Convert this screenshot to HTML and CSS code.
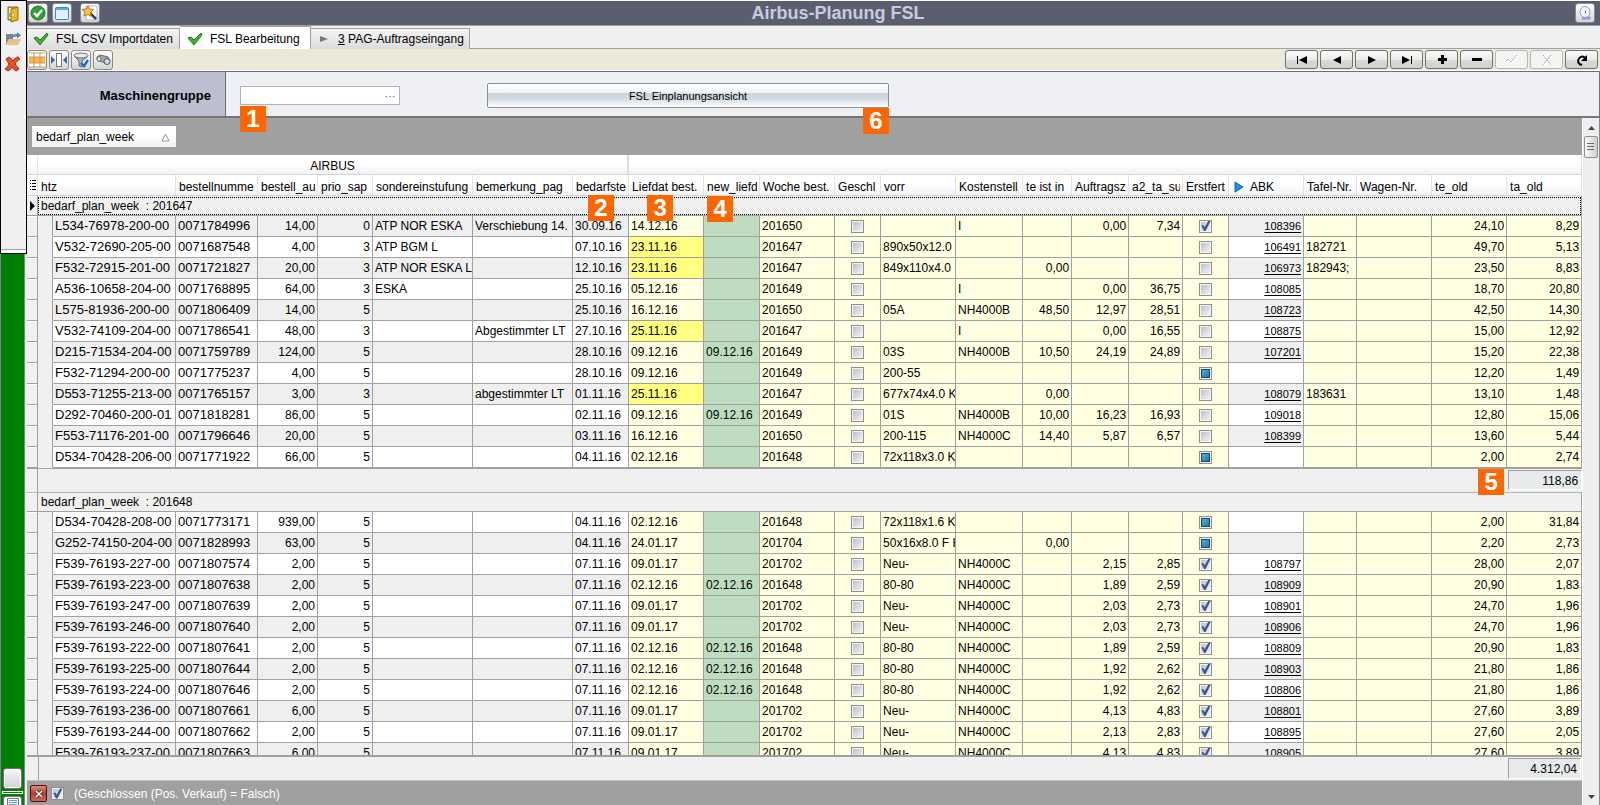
FILE: index.html
```html
<!DOCTYPE html>
<html lang="de">
<head>
<meta charset="utf-8">
<title>Airbus-Planung FSL</title>
<link rel="stylesheet" href="styles.css">
</head>
<body>
<div class="app">
  <aside class="dock">
    <div class="dock-tools">
      <button class="flat" aria-label="Beenden"><svg width="18" height="18" viewBox="0 0 18 18"><path d="M4 2h9v13H4z" fill="#c9a227" stroke="#8a6d1c"/><path d="M5 3h3v11H5z" fill="#fff8d8"/><path d="M7 4l7-2v13l-7 2z" fill="#e8b62c" stroke="#946f12"/><path d="M4 8h3v4H4z" fill="#7fc241"/><path d="M9 9v2" stroke="#fff"/></svg></button>
      <button class="flat" aria-label="Öffnen"><svg width="18" height="18" viewBox="0 0 18 18"><path d="M2 4h7v10H2z" fill="#7b828c"/><path d="M1 15l4-6h12l-3 6z" fill="#e3c48a"/><path d="M8 8c0-3 2-4 5-4V2l4 3.500-4 3V6.500c-2 0-4 0-5 1.500z" fill="#4d86b8"/></svg></button>
      <button class="flat" aria-label="Löschen"><svg width="18" height="18" viewBox="0 0 18 18"><path d="M2 4l3-2c2 1 3 3 4 4 1-2 3-4 5-4l2 2c-2 1-4 3-5 5 1 2 3 3 4 5l-3 2c-2-1-3-3-4-4-1 2-2 3-4 4l-3-2c2-2 3-3 4-5-1-2-2-3-3-5z" fill="#ee4a2c" stroke="#a82410"/></svg></button>
    </div>
    <div class="dock-body">
      <button class="square" aria-label="Fenster"></button>
      <div class="slot"></div>
      <div class="square cut"><svg width="14" height="7" viewBox="0 0 14 7"><path d="M1.500 7V.5h11V7" fill="#fff" stroke="#6c7684"/><path d="M3 2.500h8M3 4.500h8M3 6.500h8" stroke="#6d9bd0"/></svg></div>
    </div>
  </aside>

  <main class="main">
    <header class="title">
      <div class="title-tools">
        <button class="tool" aria-label="OK"><svg width="16" height="16" viewBox="0 0 16 16"><circle cx="8" cy="8" r="7" fill="#2fa032" stroke="#1b7a20"/><path d="M4 8l3 3 5-6" fill="none" stroke="#fff" stroke-width="2.400"/></svg></button>
        <button class="tool gap" aria-label="Fenster"><svg width="16" height="16" viewBox="0 0 16 16"><rect x="1.500" y="2.500" width="13" height="12" rx="1" fill="#e4effb" stroke="#2f86dc"/><path d="M2 3h12v2H2z" fill="#5aa9ef"/></svg></button>
        <button class="tool" aria-label="Assistent"><svg width="16" height="16" viewBox="0 0 16 16"><path d="M4 1h11v14H4z" fill="#fff" stroke="#b0b6d6"/><path d="M8 8l6 6" stroke="#39404f" stroke-width="2.500"/><path d="M6 1l1.500 3 4 .5-3 3 .5 4L6 9.500 2 11l1-4L0 4.500 4.500 4z" fill="#ffc23c" stroke="#c8701a"/></svg></button>
      </div>
      <h1>Airbus-Planung FSL</h1>
      <button class="tool" aria-label="Zeit"><svg width="16" height="16" viewBox="0 0 16 16"><path d="M6 12h7v2H5z" fill="#b9bde8" stroke="#8489c4"/><ellipse cx="8" cy="7" rx="5" ry="5.500" fill="#f2f3ff" stroke="#9296d8"/><path d="M8 6h1v2H8z" fill="#555"/></svg></button>
    </header>

    <nav class="tabs">
      <button class="tab first"><svg width="16" height="14" viewBox="0 0 16 14"><path d="M1 6l3-1 3 3 7-7 1 2-8 10z" fill="#3fb52f" stroke="#1d7d16"/></svg><span>FSL CSV Importdaten</span></button>
      <button class="tab active"><svg width="16" height="14" viewBox="0 0 16 14"><path d="M1 6l3-1 3 3 7-7 1 2-8 10z" fill="#3fb52f" stroke="#1d7d16"/></svg><span>FSL Bearbeitung</span></button>
      <button class="tab third"><svg width="16" height="14" viewBox="0 0 16 14"><path d="M5 4l8 3-8 3z" fill="#777"/></svg><span><u>3</u> PAG-Auftragseingang</span></button>
    </nav>

    <div class="toolbar">
      <div class="view-tools">
        <button class="tool" aria-label="Raster"><svg width="18" height="16" viewBox="0 0 18 16"><path d="M1 1h16v14H1z" fill="#fff"/><path d="M1 5h16v6H1z" fill="#ffb347"/><path d="M1 1h16M1 5h16M1 11h16M1 15h16M6 1v14M12 1v14" stroke="#c3995c" fill="none"/></svg></button>
        <button class="tool" aria-label="Spaltenbreite"><svg width="18" height="16" viewBox="0 0 18 16"><rect x="6.500" y="1.500" width="5" height="13" fill="#fff" stroke="#777"/><path d="M1 4v8l4-4zM17 4v8l-4-4z" fill="#2f6da8"/></svg></button>
        <button class="tool" aria-label="Filter"><svg width="18" height="16" viewBox="0 0 18 16"><path d="M2 4l5 5v5l3 1V9l6-5z" fill="#aab0b6" stroke="#6a7076"/><ellipse cx="9" cy="3.500" rx="7" ry="2.500" fill="#e6e8ea" stroke="#6a7076"/><path d="M9 11l3 3 4-6" fill="none" stroke="#1f6cc0" stroke-width="2.400"/></svg></button>
        <button class="tool" aria-label="Suchen"><svg width="18" height="16" viewBox="0 0 18 16"><path d="M3 5l3-2 8 2 2 4-3 3-4-2-4-1-2-2z" fill="#a3a6aa" stroke="#666"/><ellipse cx="5" cy="7" rx="2" ry="2.500" fill="#e4e6e8" stroke="#666"/><circle cx="13" cy="9.500" r="3" fill="#c3dbea" stroke="#555"/></svg></button>
      </div>
      <div class="record-tools">
        <button class="nav" aria-label="Erster"><svg width="16" height="12" viewBox="0 0 16 12"><path d="M3.500 2v8" stroke="#000"/><path d="M13 2v8L5 6z"/></svg></button>
        <button class="nav" aria-label="Zurück"><svg width="16" height="12" viewBox="0 0 16 12"><path d="M12 2v8L4 6z"/></svg></button>
        <button class="nav" aria-label="Vor"><svg width="16" height="12" viewBox="0 0 16 12"><path d="M4 2v8l8-4z"/></svg></button>
        <button class="nav" aria-label="Letzter"><svg width="16" height="12" viewBox="0 0 16 12"><path d="M3 2v8l8-4z"/><path d="M12.500 2v8" stroke="#000"/></svg></button>
        <button class="nav" aria-label="Einfügen"><svg width="16" height="12" viewBox="0 0 16 12"><path d="M8.500 1v9M4 5.500h9" stroke="#000" stroke-width="3"/></svg></button>
        <button class="nav" aria-label="Entfernen"><svg width="16" height="12" viewBox="0 0 16 12"><path d="M3 5.500h10" stroke="#000" stroke-width="3"/></svg></button>
        <button class="nav" disabled aria-label="Speichern"><svg width="16" height="12" viewBox="0 0 16 12"><path d="M3 8l2-2 3 3 6-7" fill="none" stroke="#fff" stroke-width="2"/><path d="M2 7l2-2 3 3 6-7" fill="none" stroke="#999" stroke-dasharray="2 1"/></svg></button>
        <button class="nav" disabled aria-label="Verwerfen"><svg width="16" height="12" viewBox="0 0 16 12"><path d="M5 2l8 10M13 2L5 12" fill="none" stroke="#fff" stroke-width="2"/><path d="M4 1l8 10M12 1L4 11" fill="none" stroke="#999" stroke-dasharray="2 1"/></svg></button>
        <button class="nav" aria-label="Aktualisieren"><svg width="16" height="12" viewBox="0 0 16 12"><path d="M8 11C4 10 3 7 5 4.500S9.500 2 11 4" fill="none" stroke="#000" stroke-width="2"/><path d="M13 1v6H7z"/></svg></button>
      </div>
    </div>

    <section class="form">
      <label class="form-label" for="gruppe">Maschinengruppe</label>
      <div class="form-body">
        <div class="lookup anchor">
          <input id="gruppe" type="text">
          <button class="dots" aria-label="Auswählen">···</button>
          <span class="badge badge-1">1</span>
        </div>
        <div class="anchor plan">
          <button class="plan-button">FSL Einplanungsansicht</button>
          <span class="badge badge-6">6</span>
        </div>
      </div>
    </section>

    <div class="lower">
      <div class="content">
        <div class="group-panel">
          <button class="group-chip"><span>bedarf_plan_week</span><svg width="9" height="9" viewBox="0 0 9 9"><path d="M4.500 1L8 8H1z" fill="#fff" stroke="#999"/></svg></button>
        </div>
        <div class="grid-view">
          <table class="grid">
            <colgroup id="cols"></colgroup>
            <thead id="head"></thead>
            <tbody id="body"></tbody>
          </table>
        </div>
        <div class="grid-total">
          <div class="total-mark"></div>
          <div class="sum">4.312,04</div>
        </div>
        <div class="filter-bar">
          <button class="clear" aria-label="Filter entfernen"><svg width="8" height="8" viewBox="0 0 8 8"><path d="M1 1l6 6M7 1L1 7" stroke="#333" stroke-width="3"/><path d="M1 1l6 6M7 1L1 7" stroke="#fff" stroke-width="1.500"/></svg></button>
          <label class="filter-label"><input class="check" type="checkbox" checked><span>(Geschlossen (Pos. Verkauf) = Falsch)</span></label>
        </div>
      </div>
      <div class="scrollbar">
        <svg width="9" height="6" viewBox="0 0 9 6"><path d="M1 5l3.500-4L8 5z" fill="#444"/></svg>
        <div class="thumb"><svg width="8" height="10" viewBox="0 0 8 10"><path d="M0 1.500h7M0 4.500h7M0 7.500h7" stroke="#666"/></svg></div>
        <svg class="down" width="9" height="6" viewBox="0 0 9 6"><path d="M1 1l3.500 4L8 1z" fill="#444"/></svg>
      </div>
    </div>
  </main>
</div>
<script src="app.js"></script>
</body>
</html>
```

FILE: styles.css
```css
*, *::before { box-sizing: border-box; }
body { margin: 0; font: 12px "Liberation Sans", Arial, sans-serif; color: #000; background: #f0f0f0; }
button, input { font: inherit; color: inherit; margin: 0; padding: 0; }
svg { display: block; flex: none; }
.app { display: flex; height: 100vh; overflow: hidden; }

.dock { display: flex; flex-direction: column; flex: none; width: 27px; }
.dock-tools { display: flex; flex-direction: column; align-items: flex-start; gap: 1px; height: 254px; padding-top: 1px; background: #f0f0f0; border: 1px solid #000; box-shadow: inset 0 -3px #fafafa, inset 0 -4px #a0a0a0; }
.flat { display: flex; align-items: center; justify-content: center; width: 24px; height: 24px; border: 0; background: none; }
.dock-body { display: flex; flex-direction: column; justify-content: flex-end; align-items: center; gap: 2px; flex: 1; margin-right: 2px; background: #008000; border-left: 1px solid #808090; border-right: 1px solid #808090; }
.square { width: 19px; height: 21px; border: 1px solid #777; border-radius: 3px; box-shadow: inset 0 0 0 1px #fff; background: linear-gradient(#f8f8f8, #d2d2d2); }
.slot { width: 21px; height: 3px; border: 1px solid #fff; }
.square.cut { display: flex; justify-content: center; align-items: flex-end; height: 9px; border-bottom: 0; border-radius: 3px 3px 0 0; background: #fff; }

.main { display: flex; flex-direction: column; flex: 1; min-width: 0; }
.title { display: flex; align-items: center; height: 26px; padding: 1px 5px 0 1px; background: #5a5e6e; border-bottom: 1px solid #a0a0a0; box-shadow: inset 0 1px #fff; }
.title-tools { display: flex; gap: 4px; width: 73px; }
.title h1 { flex: 1; margin: 0; text-align: center; font-size: 18px; line-height: 22px; color: #c8cbdc; }
.tool { display: flex; align-items: center; justify-content: center; width: 20px; height: 20px; border: 1px solid #8a8a8a; border-radius: 3px; background: linear-gradient(#fff, #d6d6d6); }
.tool.gap { margin-right: 4px; }

.tabs { display: flex; height: 23px; background: #f0f0f0; border-bottom: 1px solid #a0a0a0; }
.tab { display: flex; align-items: center; gap: 7px; margin-top: 2px; height: 21px; padding: 0 6px; white-space: nowrap; border: 1px solid #a0a0a0; border-bottom: 0; border-left: 0; background: linear-gradient(#f4f4f4, #dcdcdc); }
.tab.first { width: 153px; }
.tab.active { width: 131px; height: 23px; margin-top: 0; padding-top: 1px; padding-left: 7px; background: #fff; }
.tab.third { width: 159px; padding-left: 4px; }

.toolbar { display: flex; justify-content: space-between; align-items: center; height: 23px; padding: 0 2px 1px 0; background: #ece9d8; border-bottom: 1px solid #6d6f76; box-shadow: inset 0 -1px #fff; }
.view-tools, .record-tools { display: flex; gap: 2px; }
.nav { display: flex; align-items: center; justify-content: center; width: 33px; height: 19px; border: 1px solid #707070; border-radius: 3px; background: linear-gradient(#fafafa, #ececec 50%, #dadada 51%, #cfcfcf); }
.nav:disabled { border-color: #b4b8bc; background: #f4f4f4; }

.form { display: flex; height: 46px; border-bottom: 2px solid #74767e; background: #eff0f3; border-right: 1px solid #6d6f76; }
.form-label { display: flex; align-items: center; justify-content: flex-end; width: 199px; padding: 3px 14px 0 0; font-size: 13px; font-weight: bold; background: #bdbfd0; border-right: 1px solid #6d6f76; }
.form-body { display: flex; flex: 1; align-items: flex-start; padding: 11px 14px 0; }
.anchor { position: relative; }
.lookup { display: flex; width: 160px; height: 19px; margin-top: 3px; border: 1px solid #b0b4ba; background: #fff; }
.lookup input { flex: 1; min-width: 0; border: 0; outline: 0; background: none; }
.dots { width: 18px; border: 0; background: none; color: #555; font-size: 11px; line-height: 16px; }
.plan { margin-left: 87px; }
.plan-button { display: block; width: 402px; height: 25px; font-size: 11px; border: 1px solid #8a9098; border-radius: 2px; background: linear-gradient(#fff, #eef1f4 38%, #cad3dc 42%, #d4dce4 65%, #fff); }

.badge { position: absolute; z-index: 2; width: 26px; height: 26px; background: #f60; color: #fff; font-size: 24px; font-weight: bold; line-height: 26px; text-align: center; }
.badge-1 { left: -1px; top: 19px; }
.badge-6 { right: 0; top: 25px; }
.badge-2 { left: 15px; top: 20px; }
.badge-3 { left: 18px; top: 20px; }
.badge-4 { left: 3px; top: 21px; }
.badge-5 { left: 46px; top: 1px; }

.lower { display: flex; flex: 1; min-height: 0; }
.content { display: flex; flex-direction: column; flex: 1; min-width: 0; }
.group-panel { flex: none; height: 37px; padding: 8px 5px; background: #a0a0a0; }
.group-chip { display: flex; align-items: center; justify-content: space-between; width: 144px; height: 21px; padding: 1px 6px 0 4px; font-size: 12px; border: 0; background: linear-gradient(#fff 45%, #f1f2f5); }
.grid-view { flex: 1; min-height: 0; overflow: hidden; background: #f0f0f0; border-bottom: 2px solid #a0a0a0; }

.grid { width: 100%; table-layout: fixed; border-collapse: separate; border-spacing: 0; }
.grid th { position: relative; padding: 0; font-weight: normal; text-align: left; line-height: 16px; background: linear-gradient(#fff 42%, #f2f3f6); border-bottom: 1px solid #d5d5d5; border-right: 1px solid #e2e3e6; }
.bands th { height: 20px; padding-top: 2px; text-align: center; }
.bands .band { border-right: 2px solid #dcdde0; }
.heads th { height: 21px; }
.head-text { display: flex; align-items: center; gap: 6px; height: 17px; margin: 3px 2px 0 3px; overflow: hidden; white-space: nowrap; }
.grid td { height: 21px; padding: 0 2px; line-height: 16px; white-space: nowrap; overflow: hidden; border-right: 1px solid #a0a0a0; border-bottom: 1px solid #a0a0a0; background: #fff; }
.grid .odd td { background: #efefef; }
.grid td.code { font-size: 13px; }
.grid td.num { text-align: right; }
.grid td.center { text-align: center; }
.grid td.abk { text-align: right; }
.abk a { color: #000; font-size: 11px; text-decoration: underline; text-underline-offset: 2px; }
.grid td.soft { background: #ffffe1; }
.grid td.late { background: #ffff80; }
.grid td.green { background: #c0dcc0; }
.grid td.mark { padding: 0; background: #f0f0f0; box-shadow: inset 0 1px #fff; }
.grid td.indent { background: #f0f0f0; border-bottom-color: #f0f0f0; }
.grid td.group { padding: 0 3px; background: #f0f0f0; overflow: visible; }
.grid .group-row td { height: 19px; }
.grid .group-row.current td { height: 20px; }
.current .group-text { margin: 1px -3px 0; padding: 0 2px; border: 1px dotted #000; line-height: 16px; }
.grid .sum-row td { height: 25px; background: #f0f0f0; border-right: 0; border-bottom-color: #b4b4b4; box-shadow: inset 0 1px #a0a0a0; }
.grid .sum-row td.mark { border-right: 1px solid #a0a0a0; }
.grid .sum-row td.anchor { overflow: visible; }
.grid .sum-row td.sum-cell { padding: 2px 0 2px 1px; }
.sum { height: 21px; padding-right: 3px; text-align: right; line-height: 20px; background: #e6eaea; border: 1px solid #fff; border-left-color: #a0a0a0; border-top-color: #a0a0a0; }
.sum-row .sum { height: 20px; }

.check { appearance: none; display: block; width: 13px; height: 13px; margin: 0 auto; border: 1px solid #8e8f8f; background: linear-gradient(135deg, #b8bdc6, #f6f6f6); box-shadow: inset 0 0 0 1px #f4f4f4; }
.check:checked::before { content: ""; display: block; width: 11px; height: 11px; background: #3c5598; clip-path: polygon(12% 45%, 30% 42%, 42% 62%, 74% 5%, 95% 5%, 50% 95%, 36% 95%); }
.check:indeterminate::before { content: ""; display: block; width: 9px; height: 9px; margin: 1px; border: 1px solid #1c4668; background: linear-gradient(135deg, #49b4e0, #1878b0); }

.grid-total { display: flex; flex: none; height: 24px; background: #f0f0f0; border-bottom: 1px solid #c4c4c4; justify-content: space-between; align-items: center; }
.total-mark { width: 12px; height: 100%; border-right: 1px solid #a0a0a0; }
.grid-total .sum { width: 73px; margin-right: 1px; }
.filter-bar { display: flex; flex: none; align-items: center; gap: 4px; height: 24px; padding: 1px 0 0 3px; background: #a0a0a0; color: #fff; }
.clear { display: flex; align-items: center; justify-content: center; width: 17px; height: 17px; border: 1px solid #4c1212; border-radius: 2px; background: linear-gradient(#dc8c80, #b83a28 50%, #cf6b58); }
.filter-label { display: flex; align-items: center; gap: 10px; font-size: 12px; }
.scrollbar { display: flex; flex-direction: column; align-items: center; flex: none; width: 18px; padding: 7px 0 5px; background: #eee; border-left: 1px solid #fff; border-right: 1px solid #88898f; }
.thumb { display: flex; align-items: center; justify-content: center; width: 14px; height: 22px; margin-top: 5px; border: 1px solid #909090; border-radius: 2px; background: linear-gradient(90deg, #fafafa, #d0d0d0); }
.down { margin-top: auto; }
```

FILE: app.js
```js
const columns = [
  ["", 11], ["", 15], ["htz", 123], ["bestellnumme", 82], ["bestell_au", 60], ["prio_sap", 55],
  ["sondereinstufung", 100], ["bemerkung_pag", 100], ["bedarfste", 56], ["Liefdat best.", 75],
  ["new_liefd", 56], ["Woche best.", 75], ["Geschl", 46], ["vorr", 75], ["Kostenstell", 67],
  ["te ist in", 49], ["Auftragsz", 57], ["a2_ta_su", 54], ["Erstfert", 46], ["ABK", 75],
  ["Tafel-Nr.", 53], ["Wagen-Nr.", 75], ["te_old", 75], ["ta_old", 75]
];

// htz|bestellnummer|menge|prio|sondereinstufung|bemerkung|bedarf|liefdat|new|woche|vorr|kst|te ist|auftrag|a2|erst|abk|tafel|te_old|ta_old
const groups = [
  { week: "201647", total: "118,86", first: 1, rows: `
L534-76978-200-00|0071784996|14,00|0|ATP NOR ESKA|Verschiebung 14.|30.09.16|14.12.16||201650||I||0,00|7,34|x|108396||24,10|8,29
V532-72690-205-00|0071687548|4,00|3|ATP BGM L||07.10.16|23.11.16*||201647|890x50x12.0||||||106491|182721|49,70|5,13
F532-72915-201-00|0071721827|20,00|3|ATP NOR ESKA L||12.10.16|23.11.16*||201647|849x110x4.0||0,00||||106973|182943;|23,50|8,83
A536-10658-204-00|0071768895|64,00|3|ESKA||25.10.16|05.12.16||201649||I||0,00|36,75||108085||18,70|20,80
L575-81936-200-00|0071806409|14,00|5|||25.10.16|16.12.16||201650|05A|NH4000B|48,50|12,97|28,51||108723||42,50|14,30
V532-74109-204-00|0071786541|48,00|3||Abgestimmter LT|27.10.16|25.11.16*||201647||I||0,00|16,55||108875||15,00|12,92
D215-71534-204-00|0071759789|124,00|5|||28.10.16|09.12.16|09.12.16|201649|03S|NH4000B|10,50|24,19|24,89||107201||15,20|22,38
F532-71294-200-00|0071775237|4,00|5|||28.10.16|09.12.16||201649|200-55|||||m|||12,20|1,49
D553-71255-213-00|0071765157|3,00|3||abgestimmter LT|01.11.16|25.11.16*||201647|677x74x4.0 K||0,00||||108079|183631|13,10|1,48
D292-70460-200-01|0071818281|86,00|5|||02.11.16|09.12.16|09.12.16|201649|01S|NH4000B|10,00|16,23|16,93||109018||12,80|15,06
F553-71176-201-00|0071796646|20,00|5|||03.11.16|16.12.16||201650|200-115|NH4000C|14,40|5,87|6,57||108399||13,60|5,44
D534-70428-206-00|0071771922|66,00|5|||04.11.16|02.12.16||201648|72x118x3.0 K|||||m|||2,00|2,74` },
  { week: "201648", first: 0, rows: `
D534-70428-208-00|0071773171|939,00|5|||04.11.16|02.12.16||201648|72x118x1.6 K|||||m|||2,00|31,84
G252-74150-204-00|0071828993|63,00|5|||04.11.16|24.01.17||201704|50x16x8.0 F H||0,00|||m|||2,20|2,73
F539-76193-227-00|0071807574|2,00|5|||07.11.16|09.01.17||201702|Neu-|NH4000C||2,15|2,85|x|108797||28,00|2,07
F539-76193-223-00|0071807638|2,00|5|||07.11.16|02.12.16|02.12.16|201648|80-80|NH4000C||1,89|2,59|x|108909||20,90|1,83
F539-76193-247-00|0071807639|2,00|5|||07.11.16|09.01.17||201702|Neu-|NH4000C||2,03|2,73|x|108901||24,70|1,96
F539-76193-246-00|0071807640|2,00|5|||07.11.16|09.01.17||201702|Neu-|NH4000C||2,03|2,73|x|108906||24,70|1,96
F539-76193-222-00|0071807641|2,00|5|||07.11.16|02.12.16|02.12.16|201648|80-80|NH4000C||1,89|2,59|x|108809||20,90|1,83
F539-76193-225-00|0071807644|2,00|5|||07.11.16|02.12.16|02.12.16|201648|80-80|NH4000C||1,92|2,62|x|108903||21,80|1,86
F539-76193-224-00|0071807646|2,00|5|||07.11.16|02.12.16|02.12.16|201648|80-80|NH4000C||1,92|2,62|x|108806||21,80|1,86
F539-76193-236-00|0071807661|6,00|5|||07.11.16|09.01.17||201702|Neu-|NH4000C||4,13|4,83|x|108801||27,60|3,89
F539-76193-244-00|0071807662|2,00|5|||07.11.16|09.01.17||201702|Neu-|NH4000C||2,13|2,83|x|108895||27,60|2,05
F539-76193-237-00|0071807663|6,00|5|||07.11.16|09.01.17||201702|Neu-|NH4000C||4,13|4,83|x|108905||27,60|3,89` }
];

const badges = { "bedarfste": 2, "Liefdat best.": 3, "new_liefd": 4 };
const cell = (cls, text = "") => `<td class="${cls}">${text}</td>`;
const check = (state, label) =>
  `<input class="check" type="checkbox" aria-label="${label}"${state === "x" ? " checked" : ""}${state === "m" ? " data-mixed" : ""}>`;

document.getElementById("cols").innerHTML =
  columns.map(([, width]) => `<col style="width:${width}px">`).join("");

const listIcon = '<svg width="11" height="12" viewBox="0 0 11 12"><path d="M3 1.500h1M5 1.500h4M3 4.500h1M5 4.500h4M3 7.500h1M5 7.500h4M3 10.500h1M5 10.500h4" stroke="#000"/></svg>';
const playIcon = '<svg width="12" height="12" viewBox="0 0 12 12"><path d="M3 1l8 5-8 5z" fill="#1e90f0" stroke="#1464b4"/></svg>';
const rowIcon = '<svg width="10" height="10" viewBox="0 0 10 10"><path d="M3 0l5 5-5 5z"/></svg>';

const heads = columns.slice(2).map(([name], i) => {
  const badge = badges[name] ? `<span class="badge badge-${badges[name]}">${badges[name]}</span>` : "";
  const icon = name === "ABK" ? playIcon : "";
  return `<th${i === 0 ? ' colspan="2"' : ""}><div class="head-text">${icon}${name}</div>${badge}</th>`;
}).join("");

document.getElementById("head").innerHTML =
  `<tr class="bands"><th></th><th class="band" colspan="8">AIRBUS</th><th colspan="15"></th></tr>` +
  `<tr class="heads"><th>${listIcon}</th>${heads}</tr>`;

const dataRow = (line, odd) => {
  const v = line.split("|");
  const late = v[7].endsWith("*");
  return `<tr class="${odd ? "odd" : ""}">` + [
    cell("mark"), cell("indent"), cell("code", v[0]), cell("code", v[1]),
    cell("num", v[2]), cell("num", v[3]), cell("", v[4]), cell("", v[5]),
    cell("", v[6]), cell(late ? "late" : "soft", v[7].replace("*", "")),
    cell("green", v[8]), cell("soft", v[9]), cell("center soft", check("", "Geschlossen")),
    cell("soft", v[10]), cell("soft", v[11]), cell("num soft", v[12]),
    cell("num soft", v[13]), cell("num soft", v[14]),
    cell("center soft", check(v[15], "Erstfertigung")),
    cell("abk", v[16] && `<a href="#">${v[16]}</a>`), cell("soft", v[17]), cell("soft"),
    cell("num soft", v[18]), cell("num soft", v[19])
  ].join("") + "</tr>";
};

document.getElementById("body").innerHTML = groups.map((g, n) =>
  `<tr class="group-row${n === 0 ? " current" : ""}"><td class="mark">${n === 0 ? rowIcon : ""}</td>` +
  `<td class="group" colspan="23"><div class="group-text">bedarf_plan_week &nbsp;: ${g.week}</div></td></tr>` +
  g.rows.trim().split("\n").map((line, i) => dataRow(line, (i + g.first) % 2 === 1)).join("") +
  (g.total
    ? `<tr class="sum-row"><td class="mark"></td><td colspan="21"></td><td class="anchor"><span class="badge badge-5">5</span></td><td class="sum-cell"><div class="sum">${g.total}</div></td></tr>`
    : "")
).join("");

document.querySelectorAll("[data-mixed]").forEach(box => { box.indeterminate = true; });
```
